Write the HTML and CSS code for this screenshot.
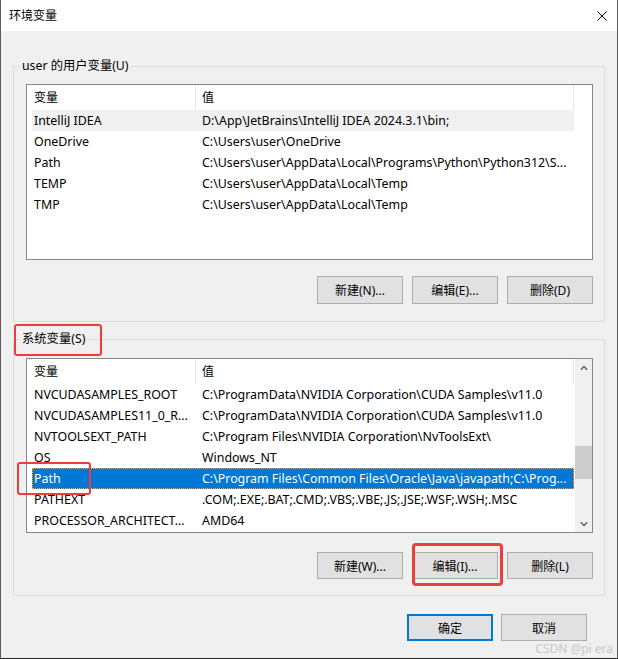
FILE: index.html
```html
<!DOCTYPE html>
<html lang="zh-CN">
<head>
<meta charset="utf-8">
<title>环境变量</title>
<link rel="stylesheet" href="styles.css">
</head>
<body>
<div class="window">
  <div class="titlebar">
    <span class="title">环境变量</span>
    <svg class="close" width="10" height="10" viewBox="0 0 10 10"><path d="M0.5 0.5 L9.5 9.5 M9.5 0.5 L0.5 9.5" stroke="#000" stroke-width="1" fill="none"/></svg>
  </div>
  <div class="content">
    <section class="group group-user">
      <div class="legend">user 的用户变量(U)</div>
      <div class="list list-user">
        <div class="rows">
          <div class="header"><div class="c1">变量</div><div class="c2">值</div></div>
          <div class="row soft"><div class="c1">IntelliJ IDEA</div><div class="c2">D:\App\JetBrains\IntelliJ IDEA 2024.3.1\bin;</div></div>
          <div class="row"><div class="c1">OneDrive</div><div class="c2">C:\Users\user\OneDrive</div></div>
          <div class="row"><div class="c1">Path</div><div class="c2">C:\Users\user\AppData\Local\Programs\Python\Python312\S...</div></div>
          <div class="row"><div class="c1">TEMP</div><div class="c2">C:\Users\user\AppData\Local\Temp</div></div>
          <div class="row"><div class="c1">TMP</div><div class="c2">C:\Users\user\AppData\Local\Temp</div></div>
        </div>
      </div>
      <div class="buttons buttons-user">
        <div class="btn">新建(N)...</div>
        <div class="btn">编辑(E)...</div>
        <div class="btn">删除(D)</div>
      </div>
    </section>

    <section class="group group-sys">
      <div class="legend">系统变量(S)</div>
      <div class="list list-sys">
        <div class="rows">
          <div class="header"><div class="c1">变量</div><div class="c2">值</div></div>
          <div class="row"><div class="c1">NVCUDASAMPLES_ROOT</div><div class="c2">C:\ProgramData\NVIDIA Corporation\CUDA Samples\v11.0</div></div>
          <div class="row"><div class="c1">NVCUDASAMPLES11_0_R...</div><div class="c2">C:\ProgramData\NVIDIA Corporation\CUDA Samples\v11.0</div></div>
          <div class="row"><div class="c1">NVTOOLSEXT_PATH</div><div class="c2">C:\Program Files\NVIDIA Corporation\NvToolsExt\</div></div>
          <div class="row"><div class="c1">OS</div><div class="c2">Windows_NT</div></div>
          <div class="row selected"><div class="c1">Path</div><div class="c2">C:\Program Files\Common Files\Oracle\Java\javapath;C:\Prog...</div></div>
          <div class="row"><div class="c1">PATHEXT</div><div class="c2">.COM;.EXE;.BAT;.CMD;.VBS;.VBE;.JS;.JSE;.WSF;.WSH;.MSC</div></div>
          <div class="row"><div class="c1">PROCESSOR_ARCHITECT...</div><div class="c2">AMD64</div></div>
        </div>
        <div class="scrollbar">
          <div class="arrow"><svg width="8" height="6" viewBox="0 0 8 6"><path d="M0.8 4.8 L4 1.6 L7.2 4.8" stroke="#606060" stroke-width="1.4" fill="none"/></svg></div>
          <div class="track"><div class="thumb"></div></div>
          <div class="arrow"><svg width="8" height="6" viewBox="0 0 8 6"><path d="M0.8 1.2 L4 4.4 L7.2 1.2" stroke="#606060" stroke-width="1.4" fill="none"/></svg></div>
        </div>
      </div>
      <div class="buttons buttons-sys">
        <div class="btn">新建(W)...</div>
        <div class="btn">编辑(I)...</div>
        <div class="btn">删除(L)</div>
      </div>
    </section>

    <div class="footer">
      <div class="btn btn-default">确定</div>
      <div class="btn btn-cancel">取消</div>
    </div>
  </div>

  <div class="mark mark-sys"></div>
  <div class="mark mark-path"></div>
  <div class="mark mark-edit"></div>
  <div class="watermark">CSDN @pi era</div>
</div>
</body>
</html>
```

FILE: styles.css
```css
* { box-sizing: border-box; }
html, body { margin: 0; padding: 0; }
body {
  width: 618px;
  height: 659px;
  overflow: hidden;
  background: #f0f0f0;
  font-family: "Noto Sans", "Noto Sans CJK SC", sans-serif;
  font-size: 12px;
  color: #000;
}
.window {
  position: relative;
  width: 618px;
  height: 659px;
  background: #f0f0f0;
  border-left: 1px solid #5c5c5c;
  border-right: 1px solid #5c5c5c;
  border-bottom: 1px solid #262626;
}
.titlebar {
  height: 31px;
  background: #fff;
  display: flex;
  align-items: center;
  padding-left: 8px;
}
.title { font-size: 12px; line-height: 16px; }
.close { margin-left: auto; margin-right: 10px; display: block; }

.content { padding: 35px 12px 0 12px; }

.group {
  border: 1px solid #dcdcdc;
  padding: 0 11px 0 12px;
}
.group-user { padding-bottom: 17px; }
.group-sys { margin-top: 17px; padding-bottom: 16px; }

.legend {
  width: fit-content;
  margin: -9px 0 0 -6px;
  padding: 0 2px;
  height: 16px;
  line-height: 16px;
  background: #f0f0f0;
  white-space: nowrap;
  font-size: 12.3px;
}

.list {
  display: flex;
  background: #fff;
  border: 1px solid #828790;
}
.list-user { margin-top: 10px; height: 176px; }
.list-sys { margin-top: 11px; height: 175px; }

.rows {
  width: 542px;
  margin-left: 5px;
  flex: none;
  font-size: 12.4px;
}
.header, .row {
  display: flex;
  white-space: nowrap;
}
.header { height: 25px; line-height: 25px; font-size: 12px; }
.row { height: 21px; line-height: 21px; }
.c1 { width: 164px; padding-left: 2px; flex: none; overflow: hidden; }
.c2 { flex: 1; padding-left: 6px; overflow: hidden; }
.header .c1, .header .c2 { border-right: 1px solid #e5e5e5; }
.row.soft { background: #f0f0f0; }
.row.selected {
  background: #0078d7;
  color: #fff;
  outline: 1px dotted #f2a65a;
  outline-offset: -1px;
}

.scrollbar {
  margin-left: auto;
  width: 17px;
  background: #f0f0f0;
  display: flex;
  flex-direction: column;
}
.arrow {
  height: 17px;
  display: flex;
  align-items: center;
  justify-content: center;
  flex: none;
}
.arrow svg { display: block; }
.track { flex: 1; }
.thumb {
  margin-top: 70px;
  height: 33px;
  background: #cdcdcd;
}

.buttons {
  display: flex;
  justify-content: flex-end;
  gap: 9px;
}
.buttons-user { margin-top: 16px; }
.buttons-sys { margin-top: 19px; }
.btn {
  width: 86px;
  height: 28px;
  background: #e1e1e1;
  border: 1px solid #adadad;
  display: flex;
  align-items: center;
  justify-content: center;
  white-space: nowrap;
}
.buttons-sys .btn { height: 27px; }

.footer {
  display: flex;
  justify-content: flex-end;
  gap: 8px;
  margin-top: 18px;
  margin-right: 18px;
}
.footer .btn { width: 86px; height: 27px; }
.btn-default { border: 2px solid #0078d7; }

.mark {
  position: absolute;
  border: 2px solid #f23b3b;
  border-radius: 3px;
}
.mark-sys { left: 13px; top: 324px; width: 88px; height: 32px; }
.mark-path { left: 16px; top: 462px; width: 74px; height: 33px; }
.mark-edit { left: 411px; top: 543px; width: 91px; height: 43px; border-width: 3px; border-radius: 4px; }

.watermark {
  position: absolute;
  right: 4px;
  top: 641px;
  font-size: 12px;
  line-height: 16px;
  color: #c8c8c8;
  white-space: nowrap;
}
```
